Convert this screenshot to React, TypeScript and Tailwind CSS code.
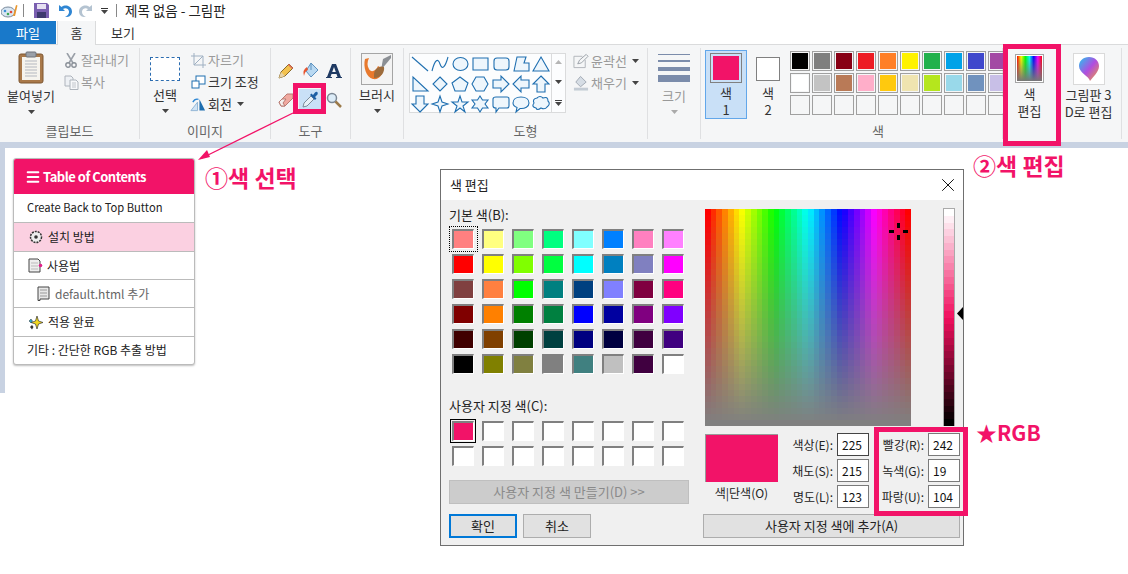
import React from 'react';
import { Menu, X } from 'lucide-react';

const PINK = '#f21368';

const SWATCHES = [
  ['#000000', '#7f7f7f', '#880015', '#ed1c24', '#ff7f27', '#fff200', '#22b14c', '#00a2e8', '#3f48cc', '#a349a4'],
  ['#ffffff', '#c3c3c3', '#b97a57', '#ffaec9', '#ffc90e', '#efe4b0', '#b5e61d', '#99d9ea', '#7092be', '#c8bfe7'],
  Array(10).fill('#f5f6f7')
];

const BASIC = [
  ['#FF8080', '#FFFF80', '#80FF80', '#00FF80', '#80FFFF', '#0080FF', '#FF80C0', '#FF80FF'],
  ['#FF0000', '#FFFF00', '#80FF00', '#00FF40', '#00FFFF', '#0080C0', '#8080C0', '#FF00FF'],
  ['#804040', '#FF8040', '#00FF00', '#008080', '#004080', '#8080FF', '#800040', '#FF0080'],
  ['#800000', '#FF8000', '#008000', '#008040', '#0000FF', '#0000A0', '#800080', '#8000FF'],
  ['#400000', '#804000', '#004000', '#004040', '#000080', '#000040', '#400040', '#400080'],
  ['#000000', '#808000', '#808040', '#808080', '#408080', '#C0C0C0', '#400040', '#FFFFFF']
];

const SHAPES = [
  'M2 3L18 17',
  'M2 17C5 5 8 4 10 10S15 14 18 3',
  'M3 10a7.5 6.5 0 1 0 15 0a7.5 6.5 0 1 0 -15 0Z',
  'M3 4H18V16H3Z',
  'M6 4H15Q18 4 18 7V13Q18 16 15 16H6Q3 16 3 13V7Q3 4 6 4Z',
  'M3 17L6 3H15L13 9H18V17Z',
  'M10 3L18 17H2Z',
  'M3 3V17H18Z',
  'M10 3L17 10L10 17L3 10Z',
  'M10 3L18 9L15 17H5L2 9Z',
  'M6 3H14L18 10L14 17H6L2 10Z',
  'M2 6H10V2L18 10L10 18V14H2Z',
  'M18 6H10V2L2 10L10 18V14H18Z',
  'M10 2L18 10H14V18H6V10H2Z',
  'M10 18L18 10H14V2H6V10H2Z',
  'M10 2L12 8L18 10L12 12L10 18L8 12L2 10L8 8Z',
  'M10 2L12 8H18L13 12L15 18L10 14L5 18L7 12L2 8H8Z',
  'M10 2L12.5 6H18L15 10L18 14H12.5L10 18L7.5 14H2L5 10L2 6H7.5Z',
  'M5 3H16Q18 3 18 5V12Q18 14 16 14H8L5 18V14Q2 14 2 12V5Q2 3 5 3Z',
  'M10 3C15 3 18 5.5 18 9C18 12.5 14 15 9 14.5L5 18L6 13.5C3.5 12.5 2 11 2 9C2 5.5 5 3 10 3Z',
  'M6 4Q9 1 12 4Q17 2 17 7Q20 10 16 13Q14 16 10 14Q6 17 5 14Q0 13 3 9Q1 5 6 4Z'
];

function Chevron({ className = '' }: { className?: string }) {
  return (
    <svg width="7" height="4" viewBox="0 0 7 4" className={className}>
      <path d="M0 0H7L3.5 4Z" fill="#444" />
    </svg>
  );
}

// ribbon group, label sits on the bottom
function Group({ width, label, labelClass = 'text-center', children }: { width: string; label?: string; labelClass?: string; children: React.ReactNode }) {
  return (
    <div className={`relative flex h-[91px] shrink-0 flex-col border-r border-[#dfe0e2] ${width}`}>
      <div className="flex h-[75px] shrink-0">{children}</div>
      {label && <div className={`text-[13px] leading-[16px] text-[#666] ${labelClass}`}>{label}</div>}
    </div>
  );
}

function SmallAction({ icon, text, muted, caret }: { icon: React.ReactNode; text: string; muted?: boolean; caret?: boolean }) {
  return (
    <div className={`flex h-[22px] items-center gap-[2px] text-[13px] ${muted ? 'text-[#9a9a9a]' : 'text-[#333]'}`}>
      <span className="flex w-[16px] justify-center">{icon}</span>
      <span className="whitespace-nowrap">{text}</span>
      {caret && <Chevron className="ml-[3px]" />}
    </div>
  );
}

function Spectrum() {
  const cols = 36;
  const rows = 36;
  const w = 206 / cols;
  const h = 217 / rows;
  const cells = [];
  for (let r = 0; r < rows; r++) {
    for (let c = 0; c < cols; c++) {
      const hue = (c / (cols - 1)) * 360;
      const sat = 100 - (r / (rows - 1)) * 100;
      cells.push(<rect key={`${r}-${c}`} x={c * w} y={r * h} width={w + 0.5} height={h + 0.5} fill={`hsl(${hue},${sat}%,50%)`} />);
    }
  }
  return (
    <svg width="206" height="217" viewBox="0 0 206 217" shapeRendering="crispEdges" className="block">
      {cells}
      <path d="M192 14h3v5h-3zM192 26h3v5h-3zM184 21h5v3h-5zM198 21h5v3h-5z" fill="#000" />
    </svg>
  );
}

function LumBar() {
  const steps = Array.from({ length: 32 }, (_, i) => {
    const l = 100 - (i / 31) * 100;
    return `hsl(339,89%,${l}%)`;
  });
  return (
    <div className="-mt-[1px] flex h-[218px] w-[12px] flex-col border-x border-t border-[#aaa]">
      {steps.map((c, i) => (
        <div key={i} className="flex-1" style={{ background: c }} />
      ))}
    </div>
  );
}

function Well({ color, selected }: { color: string; selected?: boolean }) {
  return (
    <div
      className={`relative h-[20px] w-[22px] border-t-2 border-r border-b border-l-2 border-t-[#808080] border-r-white border-b-white border-l-[#808080] ${selected ? 'outline outline-1 outline-offset-1 outline-black' : ''}`}
      style={{ background: color }}
    />
  );
}

function Field({ label, value, dark }: { label: string; value: string; dark?: boolean }) {
  return (
    <div className="flex h-[23px] items-center justify-end gap-[4px]">
      <span className="text-[12px] whitespace-nowrap text-[#222]">{label}</span>
      <div className={`flex h-[23px] w-[32px] items-center border bg-white pl-[4px] text-[12px] text-[#111] ${dark ? 'border-[#444]' : 'border-[#7a7a7a]'}`}>{value}</div>
    </div>
  );
}

function TocRow({ h, className = '', children }: { h: string; className?: string; children: React.ReactNode }) {
  return <div className={`flex items-center border-t border-[#bbb] text-[12px] text-[#222] ${h} ${className}`}>{children}</div>;
}

export default function App() {
  return (
    <div className="relative h-[574px] w-[1128px] overflow-hidden bg-white font-['Noto_Sans_CJK_KR','Noto_Sans',sans-serif] text-[#333]">
      {/* title bar */}
      <div className="flex h-[21px] items-center pl-[1px]">
        <svg width="17" height="14" viewBox="0 0 17 14">
          <ellipse cx="7" cy="8" rx="7" ry="5" fill="#d9e6f2" stroke="#7a8a9c" />
          <circle cx="4" cy="7" r="1.3" fill="#3b8ed6" />
          <circle cx="7" cy="10" r="1.3" fill="#3aa655" />
          <circle cx="10" cy="8" r="1.3" fill="#e0483a" />
          <path d="M12 12L15 1L16.5 1.5L14 12Z" fill="#e8962e" />
        </svg>
        <div className="ml-[5px] h-[13px] w-px bg-[#888]" />
        <svg width="15" height="15" viewBox="0 0 15 15" className="ml-[10px]">
          <path d="M0 0H13L15 2V15H0Z" fill="#7a5fb0" />
          <rect x="3" y="1" width="9" height="5" fill="#e6e0f2" />
          <rect x="3" y="9" width="9" height="6" fill="#3e3a6e" />
        </svg>
        <svg width="14" height="14" viewBox="0 0 14 14" className="ml-[9px]">
          <path d="M1 1V7H7L5 5C7 3.5 10.5 4 11 7.5C11.3 10 9.5 12 7 12.5C11 14 14 11 14 7.5C14 2.5 8 -0.5 3.5 3Z" fill="#2f86d3" />
        </svg>
        <svg width="14" height="14" viewBox="0 0 14 14" className="ml-[7px]">
          <path d="M13 1V7H7L9 5C7 3.5 3.5 4 3 7.5C2.7 10 4.5 12 7 12.5C3 14 0 11 0 7.5C0 2.5 6 -0.5 10.500 3Z" fill="#b4c3d1" />
        </svg>
        <div className="ml-[8px] flex flex-col items-center gap-[1px]">
          <div className="h-px w-[7px] bg-[#333]" />
          <Chevron />
        </div>
        <div className="ml-[8px] h-[13px] w-px bg-[#888]" />
        <span className="ml-[8px] text-[13.500px] leading-none text-[#222]">제목 없음 - 그림판</span>
      </div>

      {/* tabs */}
      <div className="flex h-[24px] border-b border-[#dadbdc] text-[13px]">
        <div className="flex w-[56px] items-center justify-center bg-[#1979ca] text-white">파일</div>
        <div className="z-10 ml-px flex h-[24px] w-[39px] items-center justify-center border-x border-[#dadbdc] bg-[#f5f6f7] text-[#333]">홈</div>
        <div className="ml-[15px] flex items-center text-[#333]">보기</div>
      </div>

      {/* ribbon */}
      <div className="flex h-[97px] bg-[#f5f6f7] pt-[3px] text-[13px]">
        <Group width="w-[140px]" label="클립보드">
          <div className="flex w-[62px] flex-col items-center pt-[3px]">
            <svg width="26" height="33" viewBox="0 0 26 33">
              <rect x="1" y="3" width="24" height="29" rx="2" fill="#a9794a" stroke="#7d5630" />
              <rect x="4" y="6" width="18" height="23" fill="#f6f4ee" />
              <path d="M7 10H19M7 13H19M7 16H19M7 19H19M7 22H19M7 25H19" stroke="#b4b8c0" />
              <rect x="8" y="1" width="10" height="5" rx="1" fill="#9aa0a8" stroke="#6e737a" />
            </svg>
            <div className="mt-[3px] leading-[18px] whitespace-nowrap">붙여넣기</div>
            <Chevron className="mt-[5px]" />
          </div>
          <div className="pt-[1px] pl-[1px]">
            <SmallAction
              muted
              text="잘라내기"
              icon={
                <svg width="12" height="15" viewBox="0 0 12 15">
                  <path d="M2 0L8 10M10 0L4 10" stroke="#9aa0a8" strokeWidth="1.6" fill="none" />
                  <circle cx="3" cy="12" r="2.2" stroke="#8a9098" strokeWidth="1.4" fill="none" />
                  <circle cx="9" cy="12" r="2.2" stroke="#8a9098" strokeWidth="1.4" fill="none" />
                </svg>
              }
            />
            <SmallAction
              muted
              text="복사"
              icon={
                <svg width="15" height="15" viewBox="0 0 15 15">
                  <path d="M1 1H7L9 3V11H1Z" fill="#eef1f5" stroke="#aeb4bc" />
                  <path d="M6 5H12L14 7V14.500H6Z" fill="#f7f8fa" stroke="#aeb4bc" />
                  <path d="M8 8H12M8 10H12M8 12H12" stroke="#c2c6cc" />
                </svg>
              }
            />
          </div>
        </Group>

        <Group width="w-[131px]" label="이미지">
          <div className="flex w-[50px] flex-col items-center pt-[9px]">
            <div className="h-[24px] w-[30px] border border-dashed border-[#2b6cb0] bg-white" />
            <div className="mt-[5px] leading-[18px]">선택</div>
            <Chevron className="mt-[5px]" />
          </div>
          <div className="pt-[1px]">
            <SmallAction
              muted
              text="자르기"
              icon={
                <svg width="15" height="15" viewBox="0 0 15 15">
                  <path d="M3 0V12H15M0 3H12V15M3 12L12 3" stroke="#9fb0c2" fill="none" />
                </svg>
              }
            />
            <SmallAction
              text="크기 조정"
              icon={
                <svg width="15" height="14" viewBox="0 0 15 14">
                  <rect x="5" y="1" width="9" height="8" fill="#fff" stroke="#1f6fb0" />
                  <rect x="1" y="6" width="7" height="7" fill="#fff" stroke="#1f6fb0" />
                </svg>
              }
            />
            <SmallAction
              caret
              text="회전"
              icon={
                <svg width="17" height="15" viewBox="0 0 17 15">
                  <path d="M10 2L16 14H10Z" fill="#1f6fb0" />
                  <path d="M8 5L8 14H1Z" fill="#cfe3f5" stroke="#8fb3d3" />
                  <path d="M3 5Q5 1 9 2" stroke="#2c86d4" fill="none" strokeWidth="1.4" />
                </svg>
              }
            />
          </div>
        </Group>

        <Group width="w-[80px]" label="도구">
          <div className="grid w-full grid-cols-[24px_24px_24px] grid-rows-[29px_29px] place-items-center pt-[8px] pl-[3px]">
            <svg width="16" height="16" viewBox="0 0 16 16">
              <path d="M1 15L3 9L11 1L15 5L7 13Z" fill="#f3c24f" stroke="#8a6a2a" />
              <path d="M1 15L3 9L7 13Z" fill="#e8d3a8" />
              <path d="M10 2L14 6L15 5L11 1Z" fill="#e06a5a" />
            </svg>
            <svg width="17" height="17" viewBox="0 0 17 17">
              <path d="M9 1L16 8L9 15L4 9Z" fill="#b9d9f2" stroke="#5d92c0" />
              <path d="M9 1V8" stroke="#5d92c0" />
              <path d="M5 5Q0 8 2 14Q3 9 6 8Z" fill="#e8552f" />
            </svg>
            <svg width="16" height="16" viewBox="0 0 16 16">
              <path d="M6 1H10L15 14H16V15H10V14H11.500L10.500 11H5.500L4.500 14H6V15H0V14H1ZM8 4L6.200 9H9.800Z" fill="#1f3a63" />
            </svg>
            <svg width="16" height="14" viewBox="0 0 16 14">
              <path d="M1 9L9 1H15V5L7 13H3Z" fill="#f0a9a0" stroke="#b87a72" />
              <path d="M1 9L4 6H8L5 10L7 13H3Z" fill="#f4f0ee" stroke="#b87a72" />
            </svg>
            <div className="flex h-[21px] w-[23px] items-center justify-center bg-[#c9e0f7]">
              <svg width="17" height="17" viewBox="0 0 17 17">
                <path d="M1 16L2 12L9 5L12 8L5 15Z" fill="#e7f0f8" stroke="#7b8b9a" />
                <path d="M8 4L13 9L14.500 7.500L13 6L15.500 3.500C16.500 1 14.500 0 13 1.500L11 4L9.500 2.500Z" fill="#1d5fa5" />
              </svg>
            </div>
            <svg width="16" height="16" viewBox="0 0 16 16">
              <circle cx="6" cy="6" r="4.500" fill="#dcecf8" stroke="#7b8794" strokeWidth="1.500" />
              <path d="M9.500 9.500L15 15" stroke="#9b7a4a" strokeWidth="2.500" />
            </svg>
          </div>
        </Group>

        <Group width="w-[53px]">
          <div className="flex w-full flex-col items-center pt-[5px]">
            <svg width="32" height="32" viewBox="0 0 32 32">
              <rect x="0.500" y="0.500" width="31" height="31" fill="#f3f3f3" stroke="#a5a5a5" />
              <path d="M22 6L30 2V5L20 17Z" fill="#8b8f94" />
              <path d="M4 6C2 14 5 24 12 26C18 27 22 22 22 16L17 13C15 18 10 20 8 16C6 13 6 9 8 5Z" fill="#e8792d" />
              <path d="M13 22C13 16 18 12 23 14C24 19 20 25 13 25Z" fill="#9c6b3c" />
            </svg>
            <div className="mt-[1px] leading-[18px]">브러시</div>
            <Chevron className="mt-[5px]" />
          </div>
        </Group>

        <Group width="w-[244px]" label="도형">
          <div className="mt-[5px] ml-[5px] flex h-[60px] w-[157px] shrink-0 border border-[#dadbdc] bg-[#fcfdfe]">
            <div className="grid w-[142px] grid-cols-7">
              {SHAPES.map((d, i) => (
                <svg key={i} width="20" height="20" viewBox="0 0 20 20">
                  <path d={d} fill={i < 2 ? 'none' : '#eef6fc'} stroke="#1f6fb0" strokeWidth="1.100" />
                </svg>
              ))}
            </div>
            <div className="flex w-[14px] flex-col items-center justify-between border-l border-[#dadbdc] py-[6px]">
              <svg width="7" height="4" viewBox="0 0 7 4"><path d="M0 4H7L3.500 0Z" fill="#b5b5b5" /></svg>
              <Chevron />
              <div className="flex flex-col items-center gap-[1px]">
                <div className="h-px w-[7px] bg-[#444]" />
                <Chevron />
              </div>
            </div>
          </div>
          <div className="ml-[7px] pt-[2px]">
            <SmallAction
              muted
              caret
              text="윤곽선"
              icon={
                <svg width="17" height="16" viewBox="0 0 17 16">
                  <path d="M1 3H10M1 3V15H13V7" stroke="#b0b4ba" fill="none" />
                  <path d="M5 11L7 7L14 1L16 3L9 10Z" fill="#f5f6f7" stroke="#9aa0a8" />
                </svg>
              }
            />
            <SmallAction
              muted
              caret
              text="채우기"
              icon={
                <svg width="17" height="16" viewBox="0 0 17 16">
                  <path d="M8 1L14 7L8 12L3 7Z" fill="#d6dde5" stroke="#a0a8b2" />
                  <rect x="1" y="13" width="15" height="3" fill="#c4ccd5" />
                </svg>
              }
            />
          </div>
        </Group>

        <Group width="w-[53px]">
          <div className="flex w-full flex-col items-center pt-[6px] text-[#999]">
            <div className="flex w-[32px] flex-col">
              <div className="h-px bg-[#7b8cab]" />
              <div className="mt-[5px] h-[2px] bg-[#7b8cab]" />
              <div className="mt-[5px] h-[4px] bg-[#7b8cab]" />
              <div className="mt-[4px] h-[7px] bg-[#7b8cab]" />
            </div>
            <div className="mt-[5px] leading-[18px]">크기</div>
            <svg width="7" height="4" viewBox="0 0 7 4" className="mt-[5px]"><path d="M0 0H7L3.500 4Z" fill="#aaa" /></svg>
          </div>
        </Group>

        <Group width="w-[302px]" label="색" labelClass="pl-[171px]">
          <div className="mt-[2px] ml-[4px] flex h-[69px] w-[42px] shrink-0 flex-col items-center border border-[#62a7ea] bg-[#c9e0f7] pt-[2px]">
            <div className="h-[32px] w-[32px] border border-[#808080] p-[2px]">
              <div className="h-full w-full bg-[#f21368]" />
            </div>
            <div className="mt-[1px] text-center leading-[17px] text-[#333]">색<br />1</div>
          </div>
          <div className="mt-[9px] ml-[9px] flex w-[24px] shrink-0 flex-col items-center">
            <div className="h-[24px] w-[24px] border border-[#808080] bg-white" />
            <div className="mt-[3px] text-center leading-[17px] text-[#333]">색<br />2</div>
          </div>
          <div className="mt-[3px] ml-[10px] flex shrink-0 flex-col gap-[2px]">
            {SWATCHES.map((row, r) => (
              <div key={r} className="flex gap-[2px]">
                {row.map((c, i) => (
                  <div key={i} className="h-[20px] w-[20px] border border-[#a0a0a0] p-px">
                    <div className="h-full w-full" style={{ background: c }} />
                  </div>
                ))}
              </div>
            ))}
          </div>
        </Group>

        <div className="flex h-[91px] w-[53px] shrink-0 flex-col items-center pt-[6px]">
          <div className="h-[29px] w-[29px] shrink-0 border border-[#a5a5a5] bg-white p-px">
            <div className="h-full w-full bg-[linear-gradient(to_right,#f00,#ff0,#0f0,#0ff,#00f,#f0f,#f00)]">
              <div className="h-full w-full bg-[linear-gradient(to_bottom,transparent,#777)]" />
            </div>
          </div>
          <div className="mt-[2px] text-center leading-[17px] whitespace-nowrap text-[#333]">색<br />편집</div>
        </div>

        <div className="flex h-[91px] w-[66px] shrink-0 flex-col items-center border-r border-[#dfe0e2] pt-[6px]">
          <div className="flex h-[30px] w-[30px] shrink-0 items-center justify-center bg-white shadow-[0_0_0_1px_#dadada]">
            <svg width="22" height="26" viewBox="0 0 22 26">
              <defs>
                <linearGradient id="p3d" x1="0" y1="0" x2="1" y2="1">
                  <stop offset="0" stopColor="#22c7f0" />
                  <stop offset="0.5" stopColor="#b04de0" />
                  <stop offset="1" stopColor="#f5a030" />
                </linearGradient>
              </defs>
              <path d="M11 1C17 1 21 5 21 10C21 16 15 21 12 25C11 20 1 17 1 10C1 5 5 1 11 1Z" fill="url(#p3d)" />
            </svg>
          </div>
          <div className="mt-[2px] text-center leading-[17px] whitespace-nowrap text-[#333]">그림판 3<br />D로 편집</div>
        </div>
      </div>

      {/* canvas band */}
      <div className="h-[6px] bg-[#c8d2e2]" />
      <div className="h-[245px] w-[5px] bg-[#c8d2e2]" />

      {/* blog table of contents */}
      <div className="absolute top-[158px] left-[13px] w-[182px] overflow-hidden rounded-[3px] border border-[#bbb] bg-white shadow-[0_1px_2px_rgba(0,0,0,0.25)]">
        <div className="flex h-[35px] items-center gap-[2px] bg-[#f21368] pl-[11px] text-[13px] font-bold tracking-[-0.5px] text-white">
          <Menu size={16} strokeWidth={3} />
          Table of Contents
        </div>
        <div className="flex h-[28px] items-center pb-[1px] pl-[13px] text-[11.200px] text-[#222]">Create Back to Top Button</div>
        <TocRow h="h-[29px]" className="gap-[5px] bg-[#fbd0e1] pl-[15px]">
          <svg width="14" height="14" viewBox="0 0 14 14">
            <circle cx="7" cy="7" r="5.500" fill="#eee" stroke="#333" strokeWidth="1.500" strokeDasharray="2 1" />
            <circle cx="7" cy="7" r="1.800" fill="#333" />
          </svg>
          설치 방법
        </TocRow>
        <TocRow h="h-[28px]" className="gap-[4px] pl-[14px]">
          <svg width="15" height="15" viewBox="0 0 15 15">
            <path d="M1 1H10L12 3V14H1Z" fill="#eee" stroke="#444" />
            <path d="M3 5H10M3 8H10M3 11H10" stroke="#bbb" />
            <circle cx="12.500" cy="7.500" r="1.800" fill="#e0218a" />
          </svg>
          사용법
        </TocRow>
        <TocRow h="h-[28px]" className="gap-[5px] pl-[23px] text-[11px] text-[#666]">
          <svg width="13" height="15" viewBox="0 0 13 15">
            <path d="M1 1H12V13H3V14.500H1Z" fill="#e8e8e8" stroke="#444" />
            <path d="M3 4H10M3 7H10M3 10H10" stroke="#999" />
          </svg>
          default.html 추가
        </TocRow>
        <TocRow h="h-[29px]" className="gap-[5px] pl-[14px]">
          <svg width="15" height="15" viewBox="0 0 15 15">
            <path d="M9 1L10.500 6L15 7.500L10.500 9L9 14L7.500 9L3 7.500L7.500 6Z" fill="#f2d81e" stroke="#333" strokeWidth="0.700" />
            <path d="M3 4L4.500 6L3 8L1 6Z" fill="#2aa3c9" stroke="#333" strokeWidth="0.500" />
            <path d="M4 10L5.500 12L4 14.500L2 12Z" fill="#333" />
          </svg>
          적용 완료
        </TocRow>
        <TocRow h="h-[28px]" className="pb-[1px] pl-[13px] text-[12.800px]">기타 : 간단한 RGB 추출 방법</TocRow>
      </div>

      {/* annotations */}
      <svg width="110" height="60" viewBox="0 0 110 60" className="absolute top-[110px] left-[192px]">
        <path d="M101 3L10 48" stroke={PINK} strokeWidth="1.300" />
        <path d="M6 50L15 40L18 47Z" fill={PINK} />
      </svg>
      <div className="absolute top-[83px] left-[293px] h-[31px] w-[33px] border-[5px] border-[#f21368]" />
      <div className="absolute top-[44px] left-[1003px] h-[102px] w-[58px] border-[5px] border-[#f21368]" />
      <div className="absolute top-[161px] left-[205px] text-[23px] leading-[32px] font-bold text-[#f21368]">①색 선택</div>
      <div className="absolute top-[149px] left-[973px] text-[23px] leading-[32px] font-bold text-[#f21368]">②색 편집</div>
      <div className="absolute top-[416px] left-[976px] text-[21px] leading-[32px] font-bold text-[#f21368]">★RGB</div>

      {/* color dialog */}
      <div className="absolute top-[169px] left-[440px] flex h-[377px] w-[524px] flex-col border border-[#6f6f6f] bg-[#f0f0f0] text-[13px] text-[#222]">
        <div className="flex h-[30px] shrink-0 items-center justify-between bg-white pr-[4px] pl-[9px]">
          <span>색 편집</span>
          <X size={22} strokeWidth={1} className="text-black" />
        </div>
        <div className="flex flex-1">
          <div className="flex w-[264px] flex-col pl-[8px]">
            <div className="mt-[6px] h-[18px] leading-[18px]">기본 색(B):</div>
            <div className="mt-[5px] ml-[3px] flex flex-col gap-[5px]">
              {BASIC.map((row, r) => (
                <div key={r} className="flex gap-[8px]">
                  {row.map((c, i) => (
                    <div key={i} className="relative">
                      <Well color={c} />
                      {r === 0 && i === 0 && <div className="absolute -top-[3px] -left-[3px] h-[26px] w-[29px] border border-dotted border-black" />}
                    </div>
                  ))}
                </div>
              ))}
            </div>
            <div className="mt-[23px] h-[18px] leading-[18px]">사용자 지정 색(C):</div>
            <div className="mt-[6px] ml-[3px] flex flex-col gap-[5px]">
              {[0, 1].map((r) => (
                <div key={r} className="flex gap-[8px]">
                  {Array.from({ length: 8 }, (_, i) => (
                    <Well key={i} color={r === 0 && i === 0 ? '#f21368' : '#ffffff'} selected={r === 0 && i === 0} />
                  ))}
                </div>
              ))}
            </div>
            <div className="mt-[14px] flex h-[24px] w-[240px] items-center justify-center border border-[#bfbfbf] bg-[#cccccc] text-[#8a8a8a]">사용자 지정 색 만들기(D) &gt;&gt;</div>
            <div className="mt-[10px] flex gap-[6px]">
              <div className="flex h-[24px] w-[68px] items-center justify-center border-2 border-[#0078d7] bg-[#e1e1e1]">확인</div>
              <div className="flex h-[24px] w-[68px] items-center justify-center border border-[#adadad] bg-[#e1e1e1]">취소</div>
            </div>
          </div>

          <div className="flex flex-1 flex-col">
            <div className="flex pt-[9px]">
              <Spectrum />
              <div className="relative ml-[32px]">
                <LumBar />
                <svg width="6" height="13" viewBox="0 0 6 13" className="absolute top-[98px] left-[14px]">
                  <path d="M0 6.500L6 0V13Z" fill="#000" />
                </svg>
              </div>
            </div>
            <div className="mt-[7px] flex">
              <div className="w-[73px] pt-[1px]">
                <div className="h-[48px] border-t border-l border-[#999] bg-[#f21368]" />
                <div className="mt-[1px] text-center text-[12px] leading-[20px]">색|단색(O)</div>
              </div>
              <div className="ml-[13px] flex w-[78px] flex-col gap-[3px]">
                <Field dark label="색상(E):" value="225" />
                <Field label="채도(S):" value="215" />
                <Field label="명도(L):" value="123" />
              </div>
              <div className="ml-[5px] flex w-[86px] flex-col gap-[3px]">
                <Field label="빨강(R):" value="242" />
                <Field label="녹색(G):" value="19" />
                <Field label="파랑(U):" value="104" />
              </div>
            </div>
            <div className="mt-[6px] -ml-[2px] flex h-[24px] w-[257px] items-center justify-center border border-[#adadad] bg-[#e1e1e1]">사용자 지정 색에 추가(A)</div>
          </div>
        </div>
      </div>
      <div className="absolute top-[427px] left-[874px] h-[89px] w-[94px] border-[5px] border-[#f21368]" />
    </div>
  );
}
